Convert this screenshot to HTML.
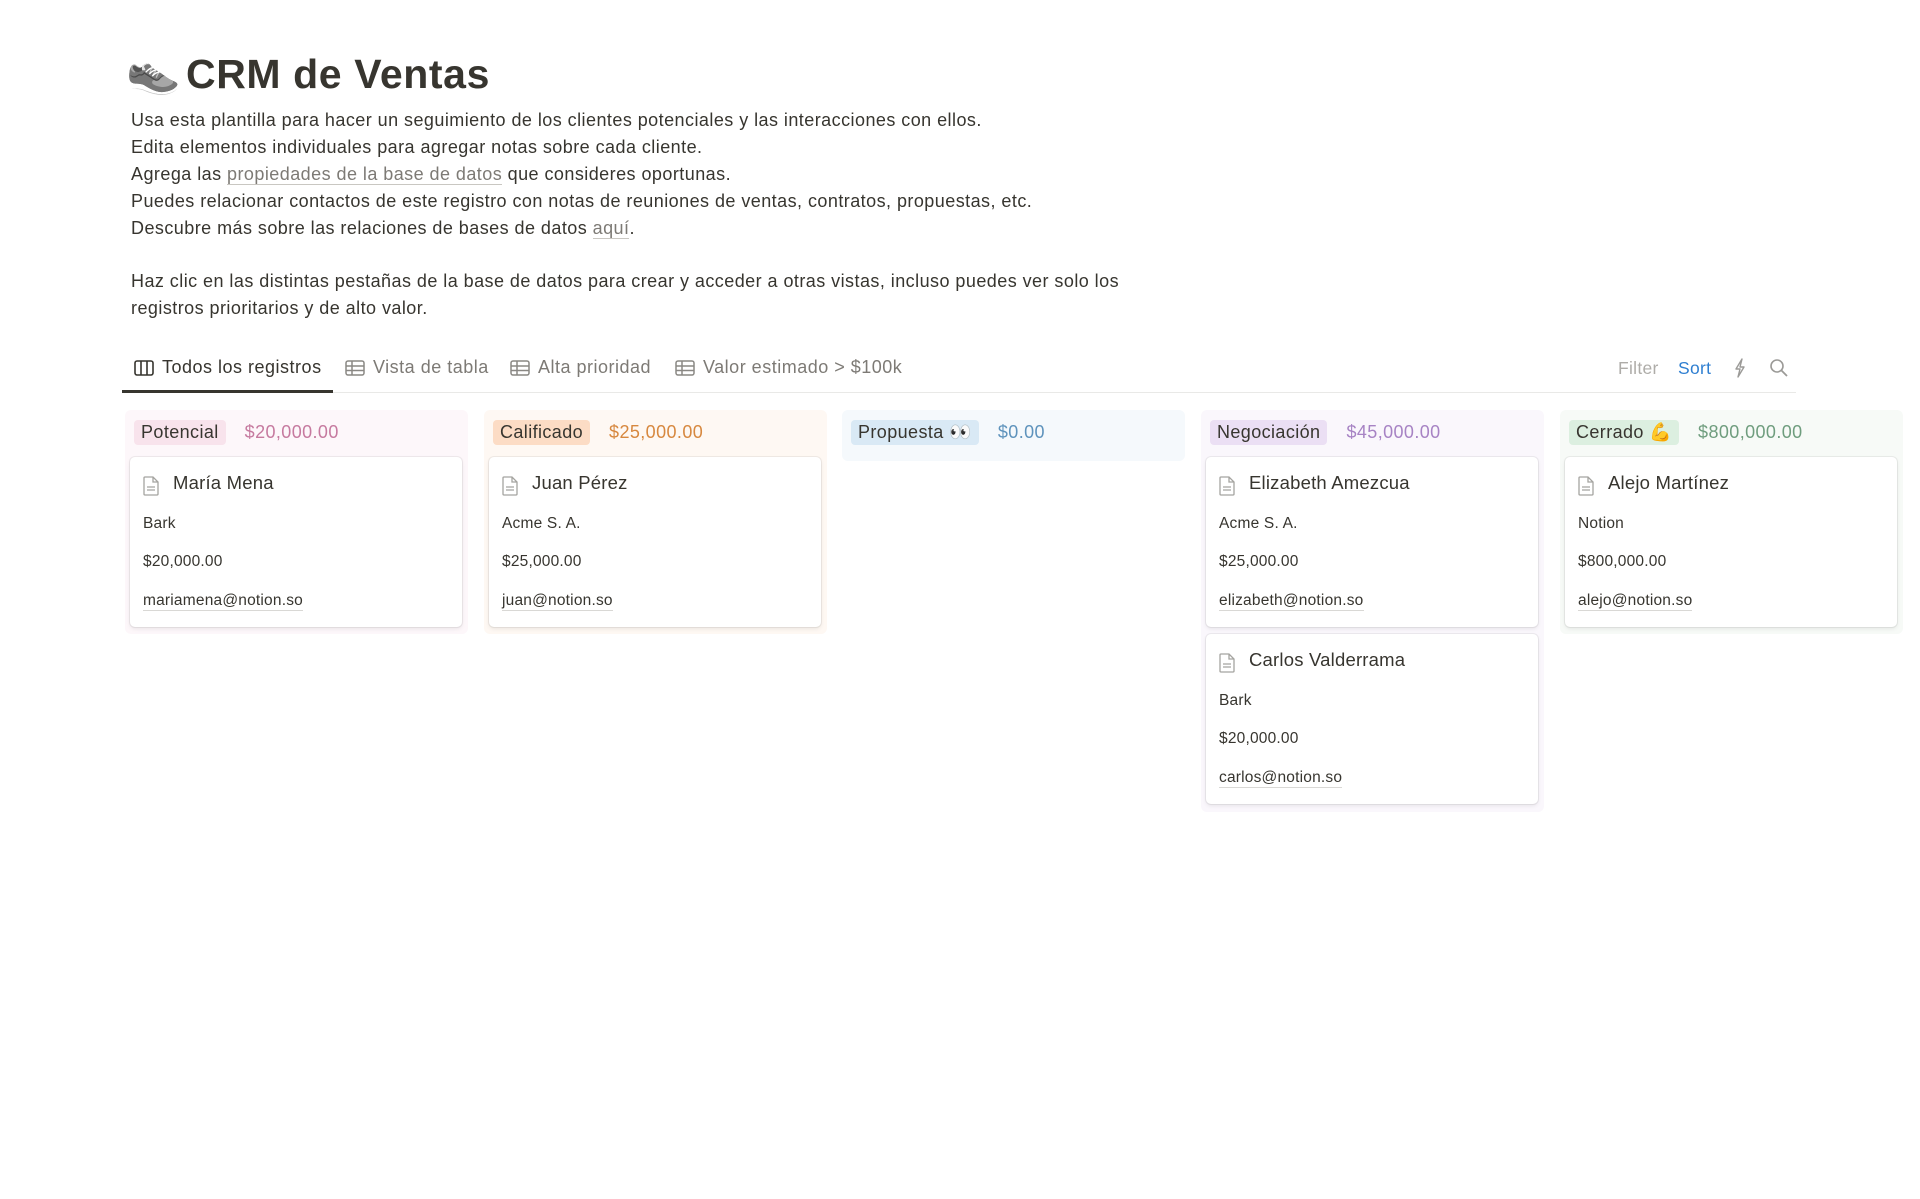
<!DOCTYPE html>
<html><head><meta charset="utf-8"><style>
*{margin:0;padding:0;box-sizing:border-box}
body{width:1920px;height:1199px;background:#fff;font-family:"Liberation Sans","Noto Sans CJK JP",sans-serif;color:#37352f;position:relative;overflow:hidden}
.abs{position:absolute;white-space:nowrap}
h1{position:absolute;left:186px;top:51px;font-size:41px;font-weight:700;color:#37352f;letter-spacing:0.6px}
.emoji{position:absolute;left:126px;top:50px;font-size:44px;line-height:1;filter:grayscale(1) brightness(1.2)}
.p{position:absolute;left:131px;font-size:18px;letter-spacing:0.45px;line-height:27px;color:#37352f}
.lnk{color:#7d7a75;border-bottom:1px solid #c9c7c2}
.tab{position:absolute;top:357px;font-size:18px;letter-spacing:0.5px;color:#7d7a75;white-space:nowrap}
.tab svg{position:absolute;left:-28px;top:2px}
.col{position:absolute;top:410px;width:343px;border-radius:6px}
.hdr{position:absolute;left:9px;top:10px;height:25px;display:flex;align-items:center;font-size:18px;letter-spacing:0.4px}
.tag{padding:0 7px;height:25px;line-height:25px;border-radius:4px;color:#37352f}
.sum{margin-left:19px}
.card{position:absolute;left:5px;width:332px;height:170px;background:#fff;border-radius:5px;box-shadow:0 0 0 1px rgba(15,15,15,.06),0 2px 4px rgba(15,15,15,.08)}
.card .t{position:absolute;left:43px;top:15px;font-size:18.5px;letter-spacing:0.2px;font-weight:500;color:#37352f}
.card svg{position:absolute;left:13px;top:19px}
.card .r{position:absolute;left:13px;font-size:15.5px;letter-spacing:0.2px;color:#37352f}
.card .e{border-bottom:1px solid #d9d8d5}
</style></head><body>
<div class="emoji">👟</div>
<h1>CRM de Ventas</h1>
<div class="p" style="top:107px">Usa esta plantilla para hacer un seguimiento de los clientes potenciales y las interacciones con ellos.<br>Edita elementos individuales para agregar notas sobre cada cliente.<br>Agrega las <span class="lnk">propiedades de la base de datos</span> que consideres oportunas.<br>Puedes relacionar contactos de este registro con notas de reuniones de ventas, contratos, propuestas, etc.<br>Descubre más sobre las relaciones de bases de datos <span class="lnk">aquí</span>.</div>
<div class="p" style="top:268px">Haz clic en las distintas pestañas de la base de datos para crear y acceder a otras vistas, incluso puedes ver solo los<br>registros prioritarios y de alto valor.</div>

<div class="tab" style="left:162px;color:#37352f"><svg width="20" height="18" viewBox="0 0 20 18"><rect x="1" y="2" width="18" height="14" rx="2" fill="none" stroke="#37352f" stroke-width="1.6"/><path d="M7 2v14M13 2v14" stroke="#37352f" stroke-width="1.6"/></svg>Todos los registros</div>
<div class="tab" style="left:373px"><svg width="20" height="18" viewBox="0 0 20 18"><rect x="1" y="2" width="18" height="14" rx="2" fill="none" stroke="#8a8884" stroke-width="1.5"/><path d="M1 7h18M1 11.5h18M7 2v14" stroke="#8a8884" stroke-width="1.5"/></svg>Vista de tabla</div>
<div class="tab" style="left:538px"><svg width="20" height="18" viewBox="0 0 20 18"><rect x="1" y="2" width="18" height="14" rx="2" fill="none" stroke="#8a8884" stroke-width="1.5"/><path d="M1 7h18M1 11.5h18M7 2v14" stroke="#8a8884" stroke-width="1.5"/></svg>Alta prioridad</div>
<div class="tab" style="left:703px"><svg width="20" height="18" viewBox="0 0 20 18"><rect x="1" y="2" width="18" height="14" rx="2" fill="none" stroke="#8a8884" stroke-width="1.5"/><path d="M1 7h18M1 11.5h18M7 2v14" stroke="#8a8884" stroke-width="1.5"/></svg>Valor estimado &gt; $100k</div>
<div class="abs" style="left:1618px;top:358px;font-size:17.5px;letter-spacing:0.3px;color:#aeaca8">Filter</div>
<div class="abs" style="left:1678px;top:358px;font-size:17.5px;letter-spacing:0.3px;color:#2f7fd1">Sort</div>
<svg class="abs" style="left:1733px;top:358px" width="14" height="20" viewBox="0 0 14 20"><path d="M9 1L3 11h4l-2 8 6-10H7z" fill="none" stroke="#9b9a97" stroke-width="1.4" stroke-linejoin="round"/></svg>
<svg class="abs" style="left:1769px;top:358px" width="20" height="20" viewBox="0 0 20 20"><circle cx="8" cy="8" r="6" fill="none" stroke="#9b9a97" stroke-width="1.6"/><path d="M12.5 12.5L18 18" stroke="#9b9a97" stroke-width="1.8"/></svg>
<div class="abs" style="left:122px;top:392px;width:1674px;height:1px;background:#e9e9e7"></div>
<div class="abs" style="left:122px;top:390px;width:211px;height:3px;background:#37352f"></div>

<div class="col" style="left:125px;height:224px;background:#fdf7fa">
 <div class="hdr"><span class="tag" style="background:#f8e3ec">Potencial</span><span class="sum" style="color:#c67a9f">$20,000.00</span></div>
 <div class="card" style="top:47px"><svg width="16" height="20" viewBox="0 0 16 20"><path d="M2 1h8l5 5v12a1 1 0 0 1-1 1H2a1 1 0 0 1-1-1V2a1 1 0 0 1 1-1zM10 1v5h5M4 11h8M4 14h8" fill="none" stroke="#a5a4a0" stroke-width="1.3"/></svg><div class="t">María Mena</div><div class="r" style="top:58px">Bark</div><div class="r" style="top:96px">$20,000.00</div><div class="r e" style="top:135px">mariamena@notion.so</div></div>
</div>
<div class="col" style="left:484px;height:224px;background:#fef8f3">
 <div class="hdr"><span class="tag" style="background:#fcdcc5">Calificado</span><span class="sum" style="color:#d7883f">$25,000.00</span></div>
 <div class="card" style="top:47px"><svg width="16" height="20" viewBox="0 0 16 20"><path d="M2 1h8l5 5v12a1 1 0 0 1-1 1H2a1 1 0 0 1-1-1V2a1 1 0 0 1 1-1zM10 1v5h5M4 11h8M4 14h8" fill="none" stroke="#a5a4a0" stroke-width="1.3"/></svg><div class="t">Juan Pérez</div><div class="r" style="top:58px">Acme S. A.</div><div class="r" style="top:96px">$25,000.00</div><div class="r e" style="top:135px">juan@notion.so</div></div>
</div>
<div class="col" style="left:842px;height:51px;background:#f5f9fc">
 <div class="hdr"><span class="tag" style="background:#d9e9f5">Propuesta 👀</span><span class="sum" style="color:#5e93bc">$0.00</span></div>
</div>
<div class="col" style="left:1201px;height:402px;background:#faf7fc">
 <div class="hdr"><span class="tag" style="background:#ebdff4">Negociación</span><span class="sum" style="color:#a783c4">$45,000.00</span></div>
 <div class="card" style="top:47px"><svg width="16" height="20" viewBox="0 0 16 20"><path d="M2 1h8l5 5v12a1 1 0 0 1-1 1H2a1 1 0 0 1-1-1V2a1 1 0 0 1 1-1zM10 1v5h5M4 11h8M4 14h8" fill="none" stroke="#a5a4a0" stroke-width="1.3"/></svg><div class="t">Elizabeth Amezcua</div><div class="r" style="top:58px">Acme S. A.</div><div class="r" style="top:96px">$25,000.00</div><div class="r e" style="top:135px">elizabeth@notion.so</div></div>
 <div class="card" style="top:224px"><svg width="16" height="20" viewBox="0 0 16 20"><path d="M2 1h8l5 5v12a1 1 0 0 1-1 1H2a1 1 0 0 1-1-1V2a1 1 0 0 1 1-1zM10 1v5h5M4 11h8M4 14h8" fill="none" stroke="#a5a4a0" stroke-width="1.3"/></svg><div class="t">Carlos Valderrama</div><div class="r" style="top:58px">Bark</div><div class="r" style="top:96px">$20,000.00</div><div class="r e" style="top:135px">carlos@notion.so</div></div>
</div>
<div class="col" style="left:1560px;height:224px;background:#f7faf7">
 <div class="hdr"><span class="tag" style="background:#dcefe0">Cerrado 💪</span><span class="sum" style="color:#6f9d7e">$800,000.00</span></div>
 <div class="card" style="top:47px"><svg width="16" height="20" viewBox="0 0 16 20"><path d="M2 1h8l5 5v12a1 1 0 0 1-1 1H2a1 1 0 0 1-1-1V2a1 1 0 0 1 1-1zM10 1v5h5M4 11h8M4 14h8" fill="none" stroke="#a5a4a0" stroke-width="1.3"/></svg><div class="t">Alejo Martínez</div><div class="r" style="top:58px">Notion</div><div class="r" style="top:96px">$800,000.00</div><div class="r e" style="top:135px">alejo@notion.so</div></div>
</div>
</body></html>
